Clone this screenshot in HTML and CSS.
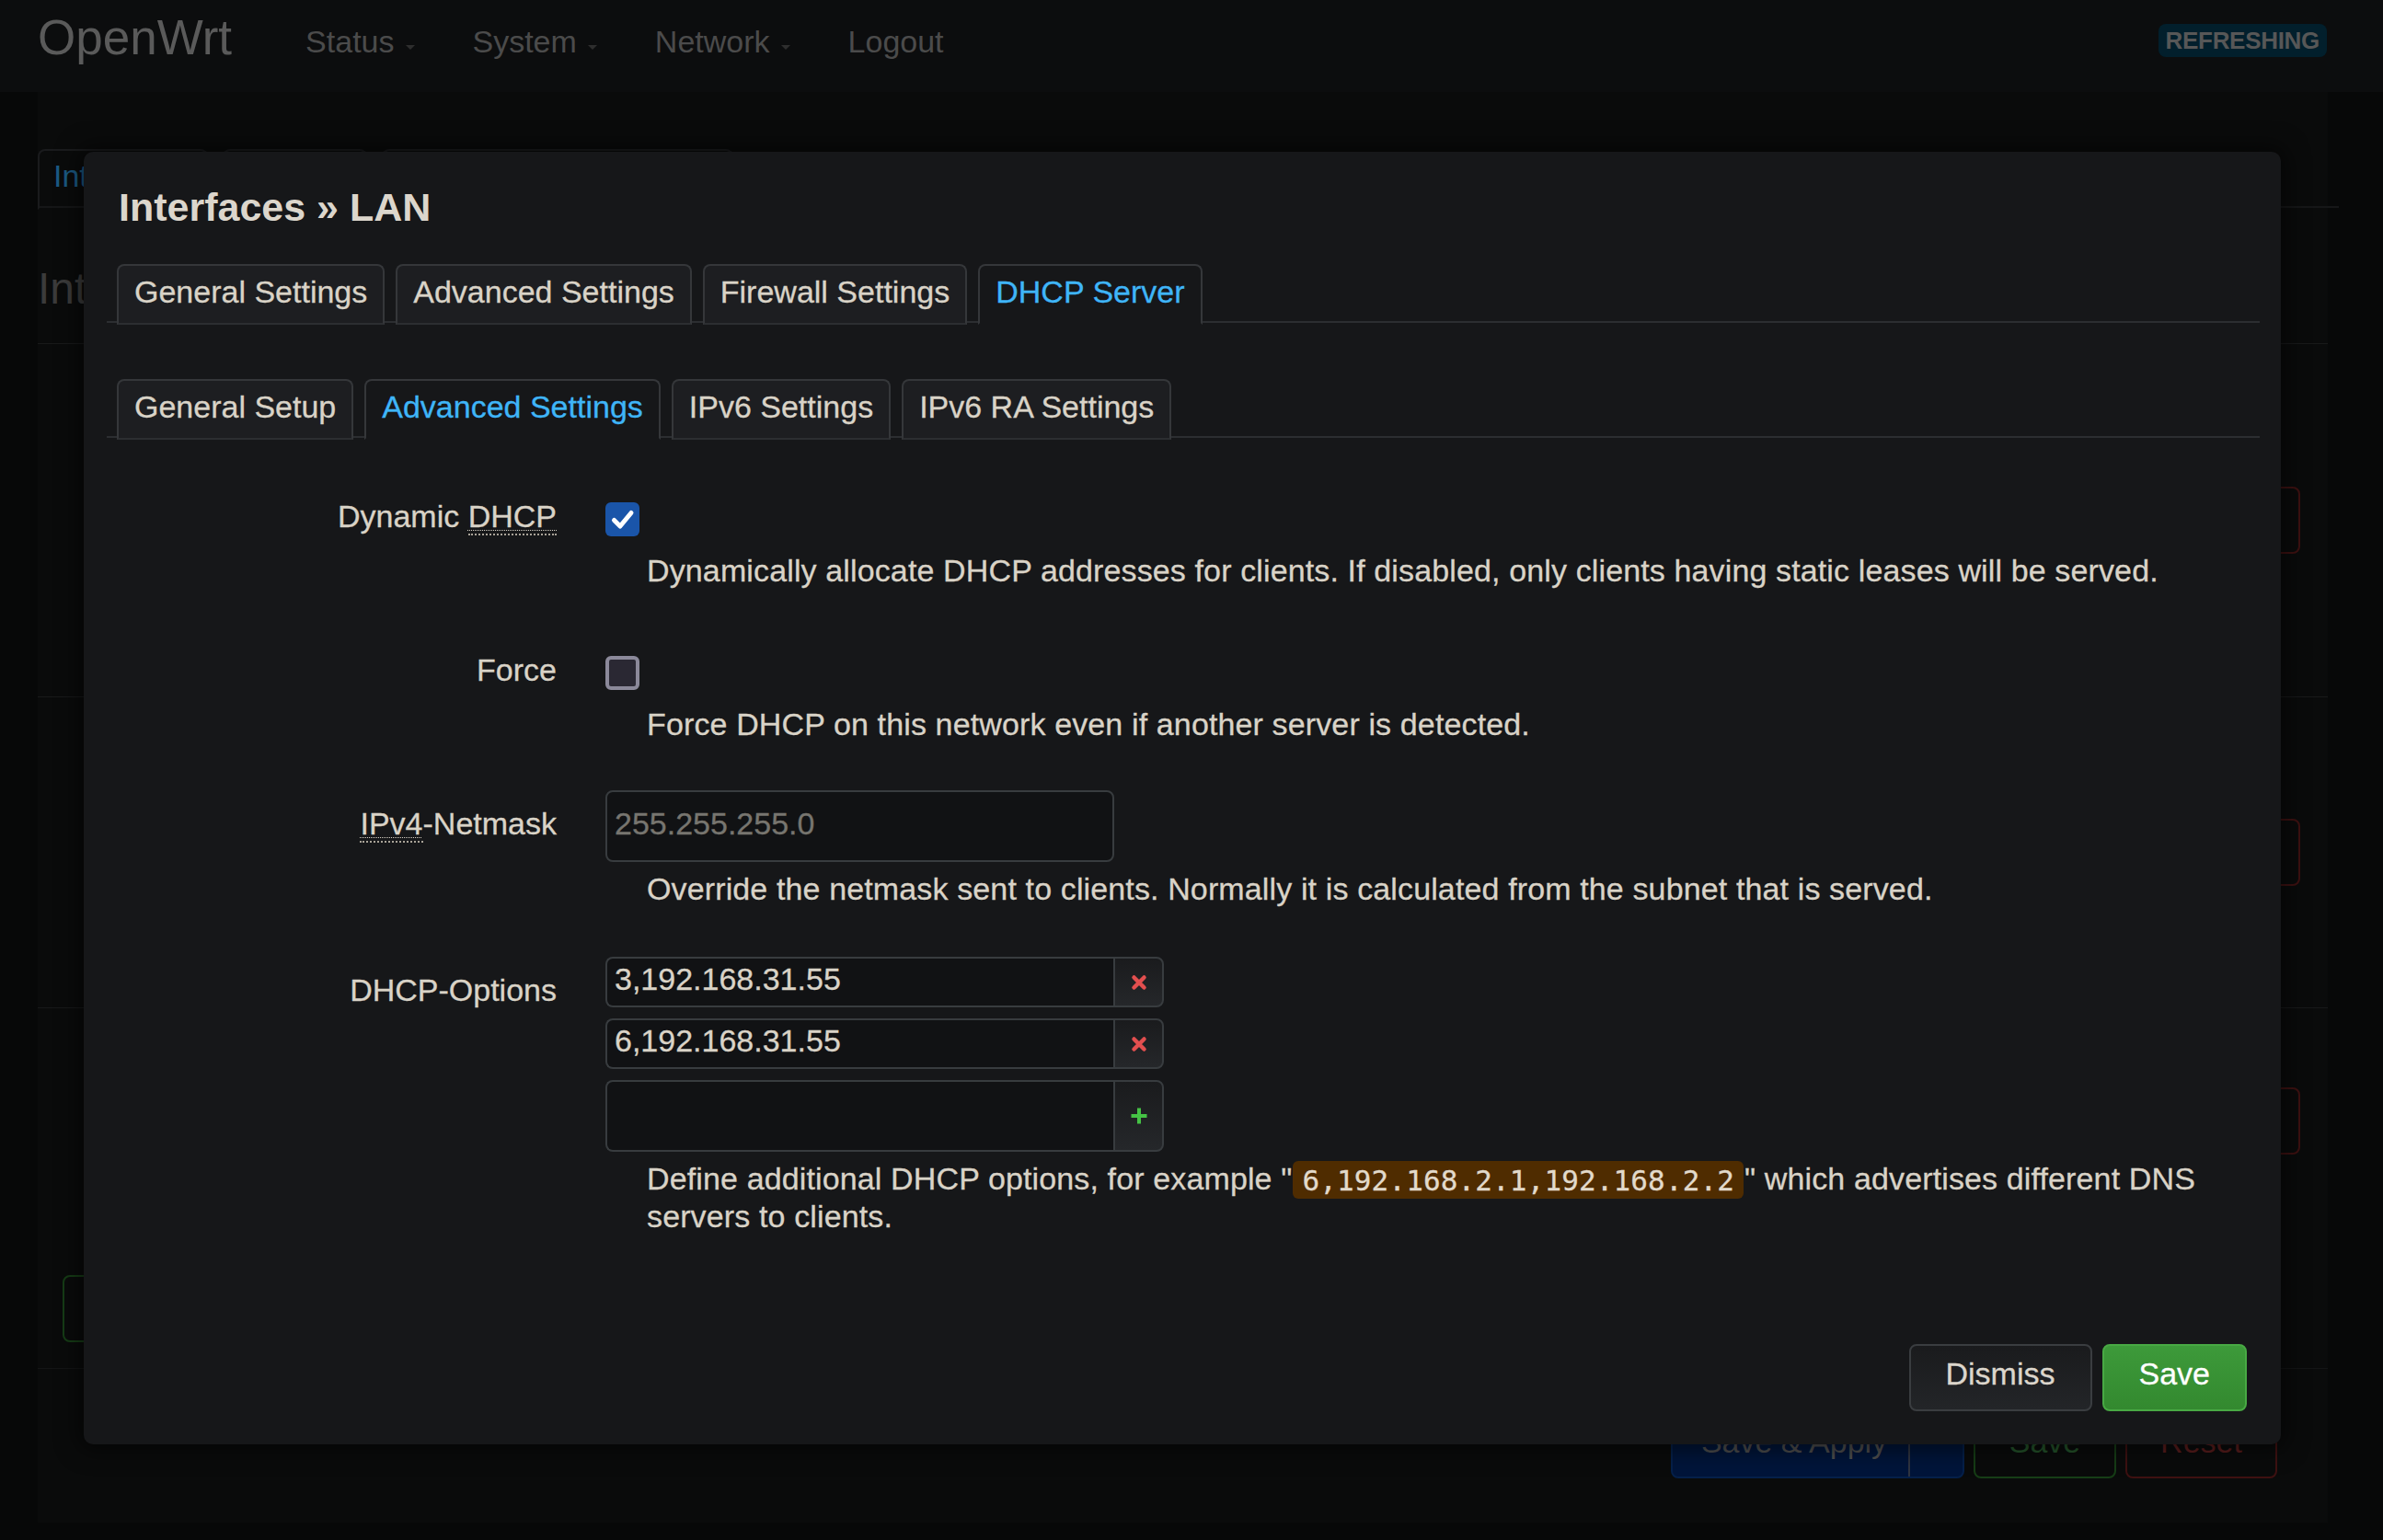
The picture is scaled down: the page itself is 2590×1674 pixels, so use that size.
FILE: index.html
```html
<!DOCTYPE html>
<html lang="en">
<head>
<meta charset="utf-8">
<title>Interfaces - LAN - LuCI</title>
<link rel="stylesheet" href="styles.css">
</head>
<body>
<header class="topbar">
  <span class="brand">OpenWrt</span>
  <ul class="nav">
    <li class="dropdown">Status<span class="caret"></span></li>
    <li class="dropdown">System<span class="caret"></span></li>
    <li class="dropdown">Network<span class="caret"></span></li>
    <li>Logout</li>
  </ul>
  <span class="badge">REFRESHING</span>
</header>

<main class="page">
  <ul class="page-tabs">
    <li class="active">Interfaces</li>
    <li>Devices</li>
    <li>Global network options</li>
  </ul>
  <h2 class="page-title">Int</h2>
  <div class="iface-table">
    <div class="iface-row r1"><span class="iface-name">lan</span><button class="btn-outline btn-red">Delete</button></div>
    <div class="iface-row r2"><span class="iface-name">wan</span><button class="btn-outline btn-red">Delete</button></div>
    <div class="iface-row r3"><span class="iface-name">wan6</span><button class="btn-outline btn-red">Delete</button></div>
  </div>
  <div class="add-wrap"><button class="btn-outline btn-green">Add new interface...</button></div>
  <div class="page-actions">
    <div class="btn-split"><span class="split-main">Save &amp; Apply</span><span class="split-caret"></span></div>
    <button class="btn-outline btn-green act-save">Save</button>
    <button class="btn-outline btn-red act-reset">Reset</button>
  </div>
</main>

<section class="modal">
  <h4 class="modal-title">Interfaces » LAN</h4>
  <ul class="tabs tabs-main">
    <li>General Settings</li>
    <li>Advanced Settings</li>
    <li>Firewall Settings</li>
    <li class="active">DHCP Server</li>
  </ul>
  <ul class="tabs tabs-sub">
    <li>General Setup</li>
    <li class="active">Advanced Settings</li>
    <li>IPv6 Settings</li>
    <li>IPv6 RA Settings</li>
  </ul>

  <div class="form">
    <div class="field field-check">
      <label class="field-label">Dynamic <abbr>DHCP</abbr></label>
      <div class="field-body">
        <div class="check-wrap">
          <span class="checkbox checked"><svg viewBox="0 0 37 37" width="37" height="37"><path d="M9.5 19.5 L16 26 L28 11.5" fill="none" stroke="#ffffff" stroke-width="5" stroke-linecap="round" stroke-linejoin="round"/></svg></span>
        </div>
        <div class="desc">Dynamically allocate DHCP addresses for clients. If disabled, only clients having static leases will be served.</div>
      </div>
    </div>

    <div class="field field-check">
      <label class="field-label">Force</label>
      <div class="field-body">
        <div class="check-wrap"><span class="checkbox unchecked"></span></div>
        <div class="desc">Force DHCP on this network even if another server is detected.</div>
      </div>
    </div>

    <div class="field field-input">
      <label class="field-label"><abbr>IPv4</abbr>-Netmask</label>
      <div class="field-body">
        <input class="text-input" type="text" placeholder="255.255.255.0">
        <div class="desc">Override the netmask sent to clients. Normally it is calculated from the subnet that is served.</div>
      </div>
    </div>

    <div class="field field-input">
      <label class="field-label">DHCP-Options</label>
      <div class="field-body">
        <div class="dynlist">
          <div class="dl-item">
            <input type="text" value="3,192.168.31.55">
            <span class="dl-btn"><svg viewBox="0 0 18 18" width="18" height="18"><path d="M3.5 3.5 L14.5 14.5 M14.5 3.5 L3.5 14.5" stroke="#e24f4f" stroke-width="4.5" stroke-linecap="round"/></svg></span>
          </div>
          <div class="dl-item">
            <input type="text" value="6,192.168.31.55">
            <span class="dl-btn"><svg viewBox="0 0 18 18" width="18" height="18"><path d="M3.5 3.5 L14.5 14.5 M14.5 3.5 L3.5 14.5" stroke="#e24f4f" stroke-width="4.5" stroke-linecap="round"/></svg></span>
          </div>
          <div class="dl-item dl-new">
            <input type="text" value="">
            <span class="dl-btn"><svg viewBox="0 0 20 20" width="20" height="20"><path d="M10 1.5 V18.5 M1.5 10 H18.5" stroke="#45c245" stroke-width="4"/></svg></span>
          </div>
        </div>
        <div class="desc">Define additional DHCP options, for example "<code>6,192.168.2.1,192.168.2.2</code>" which advertises different DNS servers to clients.</div>
      </div>
    </div>
  </div>

  <div class="modal-footer">
    <button class="btn">Dismiss</button>
    <button class="btn btn-save">Save</button>
  </div>
</section>
</body>
</html>
```

FILE: styles.css
```css
* { box-sizing: border-box; }
html, body { margin: 0; padding: 0; }
body {
  width: 2590px;
  height: 1674px;
  overflow: hidden;
  position: relative;
  background: #070808;
  font-family: "Liberation Sans", Arial, sans-serif;
  font-size: 34px;
  line-height: 41px;
  color: #d9d3c7;
}
ul { list-style: none; margin: 0; padding: 0; }
button { font: inherit; }

/* ---------- top bar (dimmed behind modal) ---------- */
.topbar {
  height: 100px;
  background: #0c0d0e;
  display: flex;
  align-items: flex-start;
  padding: 0 61px 0 41px;
}
.brand {
  font-size: 53px;
  line-height: 53px;
  margin-top: 14px;
  color: #5a5a5a;
}
.nav {
  display: flex;
  margin-left: 80px;
  margin-top: 28px;
  font-size: 34px;
  line-height: 34px;
  color: #4b4b4b;
}
.nav li { display: flex; align-items: center; }
.nav li.dropdown { margin-right: 63px; }
.caret {
  width: 0;
  height: 0;
  margin-left: 12px;
  margin-top: 12px;
  border-left: 5px solid transparent;
  border-right: 5px solid transparent;
  border-top: 5px solid #2e2e2e;
}
.badge {
  margin-left: auto;
  margin-top: 26px;
  height: 36px;
  padding: 0 8px;
  background: #021f2c;
  color: #575757;
  font-weight: bold;
  font-size: 26px;
  line-height: 36px;
  letter-spacing: -0.3px;
  border-radius: 8px;
}

/* ---------- page behind ---------- */
.page {
  margin-left: 41px;
  width: 2489px;
  height: 1555px;
  padding-top: 62px;
  background: #0a0b0b;
}
.page-tabs {
  display: flex;
  gap: 16px;
  height: 64px;
  border-bottom: 2px solid #161718;
  width: 2501px;
}
.page-tabs li {
  height: 66px;
  margin-bottom: -2px;
  padding: 7px 17px 14px 15px;
  border: 2px solid #1a1b1d;
  border-bottom-color: #161718;
  border-radius: 8px 8px 0 0;
  color: #3e3e3e;
  white-space: nowrap;
}
.page-tabs li.active {
  color: #1b5a84;
  border-bottom-color: #0a0b0b;
}
.page-title {
  margin: 59px 0 30px;
  font-size: 48px;
  line-height: 58px;
  font-weight: normal;
  color: #3b3b3b;
}
.iface-table { width: 2489px; }
.iface-row {
  display: flex;
  align-items: center;
  justify-content: space-between;
  padding: 0 30px 0 0;
  border-top: 1px solid #18191a;
}
.iface-row.r1 { height: 384px; }
.iface-row.r2 { height: 338px; }
.iface-row.r3 { height: 246px; }
.iface-name { padding-left: 140px; color: #2a2a2a; }
.btn-outline {
  height: 73px;
  padding: 10px 30px 18px;
  border: 2px solid;
  border-radius: 8px;
  background: transparent;
  line-height: 41px;
}
.btn-red { border-color: #3e1111; color: #4f1a1a; }
.btn-green { border-color: #163d16; color: #25502a; }
.add-wrap {
  padding: 45px 0 28px 27px;
  border-bottom: 1px solid #141516;
}
.page-actions {
  display: flex;
  justify-content: flex-end;
  gap: 10px;
  padding: 47px 55px 0 0;
}
.btn-split {
  display: flex;
  height: 72px;
  border: 2px solid #05204a;
  border-radius: 8px;
  background: #00153a;
  color: #4e4e4e;
}
.split-main {
  width: 256px;
  text-align: center;
  padding-top: 10px;
  padding-left: 8px;
}
.split-caret {
  width: 59px;
  border-left: 2px solid #2f3440;
}
.act-save { width: 155px; height: 72px; padding: 10px 0 18px; color: #24532a; }
.act-reset { width: 165px; height: 72px; padding: 10px 0 18px; color: #5a1d1d; }

/* ---------- modal ---------- */
.modal {
  position: absolute;
  left: 91px;
  top: 165px;
  width: 2388px;
  background: #161719;
  border-radius: 10px;
  box-shadow: 0 0 24px 6px rgba(0, 0, 0, 0.55);
  padding: 34px 23px 36px 25px;
  -webkit-text-stroke: 0.3px currentColor;
}
.modal-title {
  margin: 0;
  padding-left: 13px;
  font-size: 43px;
  line-height: 52px;
  font-weight: bold;
  color: #dcd6cc;
  -webkit-text-stroke: 0;
}
.tabs {
  display: flex;
  gap: 12px;
  height: 64px;
  padding-left: 11px;
  border-bottom: 2px solid #2c2e31;
}
.tabs-main { margin-top: 36px; }
.tabs-sub { margin-top: 61px; }
.tabs li {
  height: 66px;
  margin-bottom: -2px;
  padding: 8px 17px 13px;
  border: 2px solid #35373a;
  border-bottom-color: #2c2e31;
  border-radius: 8px 8px 0 0;
  background: #1d1e21;
  color: #d9d3c7;
  white-space: nowrap;
}
.tabs li.active {
  background: #161719;
  border-bottom-color: #161719;
  color: #3fb5f8;
}

.form { margin-top: 49px; }
.field {
  display: grid;
  grid-template-columns: 489px 1fr;
  column-gap: 53px;
}
.field + .field { margin-top: 51px; }
.field-input + .field-input { margin-top: 53px; }
.field-label {
  text-align: right;
  padding-top: 16px;
  color: #d9d3c7;
}
abbr {
  text-decoration: underline dotted 1px;
  text-underline-offset: 3px;
  border-bottom: 2px dotted #a9a398;
}
.check-wrap {
  height: 62px;
  padding-top: 21px;
}
.checkbox {
  display: block;
  width: 37px;
  height: 37px;
  border-radius: 6px;
}
.checkbox svg { display: block; }
.checkbox.checked { background: #1a55a9; }
.checkbox.unchecked {
  background: #2a2833;
  border: 4px solid #8b899a;
}
.desc {
  margin-left: 45px;
  margin-top: 13px;
  letter-spacing: 0.13px;
  color: #d9d3c7;
}
.field-input .desc { margin-top: 9px; }
.desc code {
  font-family: "DejaVu Sans Mono", monospace;
  font-size: 31px;
  line-height: 1;
  letter-spacing: 0.12px;
  background: #4f2c00;
  color: #e2dacb;
  padding: 2.5px 10px;
  margin: 0 1px;
  border-radius: 6px;
}

.text-input {
  display: block;
  width: 553px;
  height: 78px;
  padding: 14px 8px 19px;
  border: 2px solid #383c3f;
  border-radius: 8px;
  background: #111214;
  color: #d9d3c7;
  font: inherit;
  line-height: 41px;
  outline: none;
  margin: 0;
}
.text-input::placeholder { color: #77756f; opacity: 1; }

.dynlist {
  display: flex;
  flex-direction: column;
  gap: 12px;
  width: 607px;
}
.dl-item { display: flex; height: 55px; }
.dl-item.dl-new { height: 78px; }
.dl-item input {
  flex: 1;
  min-width: 0;
  height: 100%;
  margin: 0;
  padding: 2px 8px 8px;
  border: 2px solid #383c3f;
  border-right: none;
  border-radius: 8px 0 0 8px;
  background: #111214;
  color: #d9d3c7;
  font: inherit;
  line-height: 41px;
  outline: none;
}
.dl-new input { padding: 14px 8px 19px; }
.dl-btn {
  width: 55px;
  display: flex;
  align-items: center;
  justify-content: center;
  border: 2px solid #383c3f;
  border-radius: 0 8px 8px 0;
  background: linear-gradient(#1a1b1d, #25272a);
}
.dl-btn svg { display: block; }

.modal-footer {
  display: flex;
  justify-content: flex-end;
  gap: 11px;
  margin-top: 118px;
  padding-right: 14px;
}
.btn {
  height: 73px;
  padding: 10px 38px 18px;
  border: 2px solid #3a3d40;
  border-radius: 8px;
  background: linear-gradient(#1a1b1d, #232528);
  color: #dcd6cc;
  line-height: 41px;
}
.btn-save {
  background: linear-gradient(#3d9a3a, #33892f);
  border-color: #48a944;
  color: #ffffff;
}
```
